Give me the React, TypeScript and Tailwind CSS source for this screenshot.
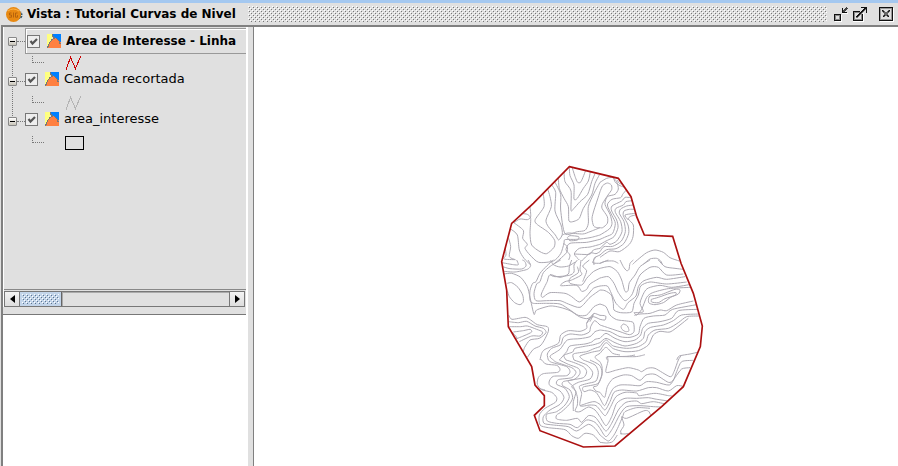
import { useState } from "react";

interface Layer {
  id: string;
  name: string;
  symbol: "red-line" | "gray-line" | "polygon";
  active?: boolean;
}

const layers: Layer[] = [
  { id: "linha", name: "Area de Interesse - Linha", symbol: "red-line", active: true },
  { id: "recortada", name: "Camada recortada", symbol: "gray-line" },
  { id: "area", name: "area_interesse", symbol: "polygon" },
];

const boundary =
  "M238 35L385 70L423 125L440 185L463 240L548 244L573 325L610 415L637 513L631 575L580 695L515 755L375 873L280 876L150 827L133 781L163 752L163 722L135 690L125 635L55 515L50 405L35 320L65 205L130 145Z";

// Contour lines, one sheet per map square
const sheets = [
  {
    x: 0,
    y: 0,
    lines: [
      "M246 36L256 67L263 82L273 80L288 44",
      "M238 38L240 62L252 90L252 132L262 130L280 100L295 78L301 50",
      "M222 50L225 80L243 108L243 166L252 160L270 140L293 118L305 80L315 56",
      "M205 67L208 100L222 130L235 155L237 198L252 199L268 190L280 160L305 120L315 85L328 60",
      "M194 80L212 118L212 165L225 236L262 230L285 226L295 205L295 155L312 115L330 82",
      "M185 90L197 112L195 168L213 210L217 238L206 255L196 240L175 215L168 195L184 155L180 125L173 102",
      "M160 118L162 155L136 193L140 207L175 232L194 256L192 277L170 296L150 290L125 270L120 235L122 190L112 178L98 176",
      "M120 155L122 185L112 194L90 192L72 203",
      "M70 202L100 226L98 250L112 268L105 280L120 300L146 322L190 318L212 296L222 265L225 254L260 253L300 248L330 240",
      "M62 222L82 240L88 285L102 310L120 328",
      "M56 250L62 275L58 305L76 314",
      "M46 280L48 300L42 312L76 314",
      "M232 248L240 242L266 245L262 255L240 257L232 248",
      "M217 240L235 234L278 237L300 230L330 218",
      "M330 110L322 135L312 165L306 190L311 213L322 218L330 218",
      "M330 253L290 262L240 265L228 284L240 300L236 315",
      "M330 268L300 276L268 280L253 297L268 315",
      "M330 280L310 285L298 298L253 297",
      "M330 290L318 296L300 294L275 318",
      "M330 300L312 310L312 330",
      "M220 265L232 275L230 292L210 312L190 328",
    ],
  },
  {
    x: 330,
    y: 0,
    lines: [
      "M0 110L8 92L22 84L34 90L35 104L24 120L8 145L6 160L22 185L22 205L8 218L0 218",
      "M0 82L20 70L38 68L50 80L55 102L45 118L22 125L15 148L30 178L36 205L28 222L0 240",
      "M40 67L46 82L60 92L75 97",
      "M52 75L58 85L72 88",
      "M78 106L68 118L62 128L36 133L22 150L36 182L46 205L38 235L18 245L0 253",
      "M92 128L75 127L65 138L36 153L35 168L50 195L54 218L42 245L18 258L0 268",
      "M97 137L78 140L70 150L48 160L46 172L62 200L66 230L50 258L30 268L20 262L0 280",
      "M100 150L80 153L62 162L58 175L72 200L76 230L64 258L38 274L12 275L0 290",
      "M103 163L88 163L72 168L70 182L84 210L86 235L72 265L48 281L20 284L0 300",
      "M106 180L92 184L85 192L100 210L99 245L88 268L58 290L30 288L0 307",
      "M106 175L75 180L85 195",
      "M0 325L15 319L40 318L55 325",
      "M98 328L112 315L140 293L165 285L190 292L210 308L238 318",
      "M130 328L150 312L170 310L182 318L188 330",
    ],
  },
  {
    x: 0,
    y: 315,
    lines: [
      "M38 20L60 26L95 27L108 18L105 5L97 0",
      "M36 8L70 14L85 14L80 0",
      "M42 34L75 36L112 28L122 16L114 0",
      "M42 42L65 40L92 52L112 80L120 112L132 163L140 150L180 138L210 142L240 152L268 170L290 176L310 170L330 178",
      "M52 70L65 68L84 82L98 105L100 125L90 134L74 128L58 110L52 92",
      "M190 0L170 18L150 40L138 65L128 70L120 92L120 120L130 130L170 130L210 132L240 150L265 166L290 165L312 140L330 132",
      "M212 0L182 18L160 38L150 65L140 72L132 100L138 122L170 122L210 122L235 132L270 142L300 112L330 90",
      "M172 64L180 44L210 52L235 42L238 20L245 0",
      "M172 64L154 102L158 112L180 98L225 100L245 110L268 126L290 108L310 85L330 78",
      "M180 44L195 50L238 46L252 36L252 15L262 0",
      "M182 0L190 14L210 21L235 18L256 6",
      "M273 0L270 30L275 44L245 60L225 65L212 77L260 76L275 94L290 88L300 72L330 54",
      "M262 20L265 38L240 55L240 70L275 75L290 55L310 35L330 25",
      "M298 0L278 18L290 32L282 55L278 65",
      "M318 -10L308 8L330 10",
      "M290 190L305 170L312 160L330 166",
      "M56 165L66 178L105 172L122 180L142 194L172 200L175 214L162 242L150 258L130 268L112 292",
      "M56 185L85 188L110 184L135 198L160 205L168 218L148 235L120 240L104 262L100 275",
      "M58 200L92 200L112 198L140 208L158 216L150 228L125 228L88 245",
      "M70 216L100 212L120 208L125 216L105 226L75 238",
      "M65 215L80 232L74 238",
      "M150 300L155 280L165 268L205 250L212 225L235 212L270 214L290 205L290 190L300 172L310 164L300 185",
      "M175 300L172 282L185 265L212 254L220 232L240 222L275 225L298 216L302 200L314 182L330 195",
      "M190 300L180 288L210 268L232 240L270 236L300 230L315 215L330 210",
      "M208 300L230 275L240 258L285 252L305 246L315 238L330 235",
      "M228 300L222 286L248 276L255 265L290 258L312 254L330 248",
      "M252 300L250 282L290 275L312 266L330 260",
      "M280 300L270 288L308 276L330 272",
      "M322 300L315 290L330 280",
    ],
  },
  {
    x: 330,
    y: 315,
    lines: [
      "M0 10L25 0",
      "M60 0L70 20L80 32L87 28L90 10L100 0",
      "M0 25L30 20L52 35L65 60L75 94L84 92L88 68L105 45L120 20L150 0",
      "M0 54L25 50L42 70L55 98L75 122L95 105L105 80L120 45L150 22L175 22L200 45L250 42",
      "M175 0L195 20L225 25L250 28",
      "M0 78L22 78L34 100L48 130L70 148L84 128L108 108L115 80L132 62L170 52L200 58L255 50",
      "M0 90L15 92L34 105L40 130L42 150L62 158L95 156L102 130L115 105L122 78L150 66L200 72L260 66",
      "M102 158L130 155L120 130L132 98L145 84L180 76L215 82L268 74",
      "M102 158L110 165L125 148L140 112L158 98L205 86L270 82",
      "M145 122L150 108L180 105L225 88L240 90L235 102L212 112L190 128L165 134L148 130L145 122",
      "M154 118L175 112L210 100L228 98L225 106L195 116L175 128L155 126L154 118",
      "M63 200L70 192L82 198L87 212L77 215L66 208L63 200",
      "M0 166L17 168L15 180L0 178",
      "M0 132L18 140L30 165L50 179L80 183L100 188L102 215L88 224L60 215L30 205L0 195",
      "M103 166L120 162L150 160L180 150L200 152L230 135L280 123",
      "M0 210L30 215L60 230L90 232L115 222L120 200L132 175L160 168L195 165L218 148L290 134",
      "M0 235L18 220L45 235L75 245L105 240L122 225L128 205L145 190L180 185L215 175L235 152L292 148",
      "M0 248L18 235L45 248L75 258L110 250L130 235L135 215L152 202L190 195L220 182L245 165L296 162",
      "M0 260L18 240L40 258L80 265L115 260L138 245L145 225L165 210L205 205L235 188L260 170L298 168",
      "M0 272L18 248L40 266L75 275L115 272L145 255L160 225L180 214L210 216L240 195L265 175",
      "M0 280L18 262L38 280L60 285",
      "M22 300L24 290L105 290L135 284",
      "M230 300L238 288L270 282L292 277",
    ],
  },
  {
    x: 0,
    y: 600,
    lines: [
      "M152 12L168 27L200 31L210 42L203 52L160 56L145 68L142 88L155 104L185 112L200 128L196 142L165 160L148 180L150 210L175 218L225 224L245 242L265 250L285 235L310 240L330 262",
      "M175 15L185 22L230 35L240 50L230 62L190 64L178 78L180 92L210 108L222 128L210 148L180 165L160 185L162 205L190 210L235 215L260 228L295 208L315 220L330 240",
      "M190 15L200 22L245 38L258 52L245 68L205 74L200 88L225 100L238 125L225 150L200 170L170 178L172 198L200 205L240 208L262 218L290 195L315 202L330 220",
      "M208 15L235 28L265 40L270 55L255 72L220 80L218 92L240 105L248 128L238 148L215 170L200 180L200 192L230 196L262 190L275 202L295 182L315 186L330 205",
      "M228 15L250 22L280 35L290 50L280 68L235 78L250 95L262 125L262 150L255 168L270 170L295 156L315 165L330 185",
      "M252 15L290 30L308 52L300 72L265 82L245 95L258 110L250 140L250 168",
      "M280 15L315 30L325 52L318 78L290 86L268 94L275 115L270 152L300 150L318 152L330 165",
      "M270 152L300 142L315 140L330 148",
      "M300 15L328 30L336 52L325 85L280 96L282 110L300 105L318 112L330 130",
      "M322 15L330 20",
      "M330 75L322 92L310 96L318 108L330 112",
      "M145 100L165 105",
    ],
  },
  {
    x: 330,
    y: 600,
    lines: [
      "M22 5L24 18L18 52L50 45L85 38L115 45L125 50L142 40L165 40L210 65L222 50L235 15L245 0",
      "M22 5L80 4L105 0",
      "M0 20L6 35L6 60L0 75",
      "M0 112L14 127L22 95L38 72L70 60L95 62L120 76L138 60L165 58L205 82L220 75L230 50L245 20L280 16",
      "M0 130L14 152L28 122L40 100L60 90L90 90L120 92L140 80L170 82L208 90L225 68L245 42L270 38",
      "M0 148L15 165L30 140L42 112L65 105L110 108L145 98L170 98L205 108L230 92L250 94",
      "M0 165L16 182L32 155L48 125L75 112L110 114L118 122L165 115L205 122L215 122",
      "M0 185L18 212L35 185L50 145L75 130L110 130L145 128L165 132L205 138",
      "M0 205L18 228L35 205L55 165L78 142L110 138L125 146L160 140L200 148",
      "M0 220L18 245L38 220L60 178L80 155L120 152L160 155L185 156",
      "M0 240L25 258L42 240L55 215L68 185L75 170L110 158L150 160",
      "M65 238L62 228L72 210L65 185L80 190L130 168L145 168L152 180",
      "M60 236L75 237L85 235",
      "M0 262L20 264L38 260L52 240",
    ],
  },
];

// Rounds the corners of a surveyed polyline while keeping its vertices
function smooth(line: string) {
  const pts = line
    .slice(1)
    .split("L")
    .map((p) => p.split(" ").map(Number));
  let d = `M${pts[0][0]} ${pts[0][1]}`;
  for (let i = 0; i < pts.length - 1; i++) {
    const a = pts[i - 1] ?? pts[i];
    const b = pts[i];
    const c = pts[i + 1];
    const e = pts[i + 2] ?? c;
    d += `C${b[0] + (c[0] - a[0]) / 8} ${b[1] + (c[1] - a[1]) / 8} ${c[0] - (e[0] - b[0]) / 8} ${c[1] - (e[1] - b[1]) / 8} ${c[0]} ${c[1]}`;
  }
  return d;
}

function AppIcon() {
  return (
    <svg viewBox="0 0 17 17" className="h-[17px] w-[17px] shrink-0">
      <circle cx="12.500" cy="9" r="4" fill="#31546b" />
      <path d="M14.500 5.500l1.500 2M15 9.500h2M14 12l1.500 1" stroke="#d1d8dc" fill="none" />
      <circle cx="7.500" cy="8.500" r="7.500" fill="#e88912" />
      <path d="M2 5Q7 1 13 5" stroke="#ffb347" fill="none" />
      <path
        d="M5.500 7H3.500v2h2v2.200H3.200M7.500 6.500v5M11.500 7h-2v4.200h2V9.200"
        stroke="#a9590a"
        strokeWidth="0.800"
        fill="none"
      />
    </svg>
  );
}

function LayerIcon() {
  return (
    <svg viewBox="0 0 15 15" shapeRendering="crispEdges" className="h-[15px] w-[15px] shrink-0">
      <path d="M0 0h7L3 8 0 14z" fill="#ffff80" />
      <path d="M6 0h8v11L10 5 6 4z" fill="#0080ff" />
      <path d="M1 14L3 9L4 6L7 4L10 4L12 7L14 9V14z" fill="#ff8040" />
      <path d="M5.500 0v2L7.500 4L4.500 6L2.500 9L1.500 11L0.500 14" stroke="#777" fill="none" />
      <path d="M9 4L12 7V9L14 10" stroke="#777" fill="none" />
    </svg>
  );
}

function Symbol({ kind }: { kind: Layer["symbol"] }) {
  if (kind === "polygon") {
    return <span className="h-[14px] w-[19px] border border-black" />;
  }
  return (
    <svg viewBox="0 0 17 14" shapeRendering="crispEdges" className="h-[14px] w-[17px]">
      <path
        d="M1 13.500L5.500 1.500L10.500 12.500L15.500 0.500"
        fill="none"
        stroke={kind === "red-line" ? "#cc0000" : "#b4b4b4"}
      />
    </svg>
  );
}

function LayerRow({ layer }: { layer: Layer }) {
  const [visible, setVisible] = useState(true);

  return (
    <li>
      <label
        className={
          layer.active
            ? "flex h-[26px] items-center border border-r-0 border-[#999] pl-px text-[12px] font-bold shadow-[inset_1px_1px_0_#fff]"
            : "flex h-[18px] items-center text-[13px]"
        }
      >
        <span className="relative mr-[7px] h-[13px] w-[13px] shrink-0">
          <input
            type="checkbox"
            checked={visible}
            onChange={(e) => setVisible(e.target.checked)}
            className="block h-[13px] w-[13px] appearance-none border border-[#777] bg-[#eee]"
          />
          {visible && (
            <svg viewBox="0 0 13 13" className="pointer-events-none absolute inset-0">
              <path d="M3.500 6L5.500 8.500L10 4" fill="none" stroke="#555" strokeWidth="2.200" />
            </svg>
          )}
        </span>
        <LayerIcon />
        <span className="ml-1 whitespace-nowrap">{layer.name}</span>
      </label>
      <div
        className={
          layer.active ? "flex h-4 items-start pt-[2px] pl-[7px]" : "flex h-[22px] items-end pl-[7px]"
        }
      >
        <span className="mr-[21px] mb-[7px] h-[7px] w-3 border-b border-l border-dotted border-[#777]" />
        <Symbol kind={layer.symbol} />
      </div>
    </li>
  );
}

function LayerTree() {
  return (
    <div className="flex h-[263px] overflow-hidden border-b border-[#888] pt-px">
      <div className="relative w-[21px] shrink-0 pt-[9px] pl-1">
        <div className="absolute top-[18px] left-2 h-[72px] border-l border-dotted border-[#777]" />
        <div className="relative flex flex-col gap-[31px]">
          {layers.map((l) => (
            <div key={l.id} className="flex h-[9px] items-center">
              <button
                aria-label={`Recolher ${l.name}`}
                className="flex h-[9px] w-[9px] shrink-0 items-center justify-center rounded-[1px] border border-[#888] bg-gradient-to-b from-white to-[#c8c4b8]"
              >
                <span className="h-px w-[5px] bg-black" />
              </button>
              <span className="flex-1 border-t border-dotted border-[#777]" />
            </div>
          ))}
        </div>
      </div>
      <ul className="min-w-0 flex-1">
        {layers.map((l) => (
          <LayerRow key={l.id} layer={l} />
        ))}
      </ul>
    </div>
  );
}

function Scrollbar() {
  const arrow =
    "flex w-[14px] shrink-0 items-center justify-center bg-gradient-to-b from-[#f4f4f4] to-[#ddd]";
  return (
    <div className="mt-px mr-px flex h-4 border border-[#777]">
      <button aria-label="Rolar para a esquerda" className={arrow}>
        <svg viewBox="0 0 5 8" className="h-2 w-[5px]">
          <path d="M5 0v8L0 4z" />
        </svg>
      </button>
      <div className="flex flex-1 border-x border-[#777]">
        <div className="w-[42px] border-r border-[#666] bg-[#c3d5ea] p-[2px]">
          <svg className="block h-[10px] w-full" shapeRendering="crispEdges">
            <defs>
              <pattern id="grip" width="4" height="4" patternUnits="userSpaceOnUse">
                <path d="M0 0h1v1H0zM2 2h1v1H2z" fill="#fff" />
                <path d="M1 1h1v1H1zM3 3h1v1H3z" fill="#5f7690" />
              </pattern>
            </defs>
            <rect width="100%" height="100%" fill="url(#grip)" />
          </svg>
        </div>
        <div className="flex-1 border-t border-l border-[#aaa]" />
      </div>
      <button aria-label="Rolar para a direita" className={arrow}>
        <svg viewBox="0 0 5 8" className="h-2 w-[5px]">
          <path d="M0 0v8L5 4z" />
        </svg>
      </button>
    </div>
  );
}

function TitleBar() {
  return (
    <header className="flex h-[25px] shrink-0 items-center border-t-[3px] border-[#a4c8f0] pr-1 pl-[6px]">
      <AppIcon />
      <h1 className="ml-1 text-[12px] font-bold whitespace-nowrap">Vista : Tutorial Curvas de Nivel</h1>
      <svg className="ml-3 h-4 flex-1" shapeRendering="crispEdges">
        <defs>
          <pattern id="bumps" width="4" height="4" patternUnits="userSpaceOnUse">
            <path d="M0 0h1v1H0zM2 2h1v1H2z" fill="#fff" />
            <path d="M1 1h1v1H1zM3 3h1v1H3z" fill="#777" />
          </pattern>
        </defs>
        <rect width="100%" height="100%" fill="url(#bumps)" />
      </svg>
      <div className="ml-[6px] flex items-center gap-1">
        <button aria-label="Minimizar">
          <svg viewBox="0 0 15 15" shapeRendering="crispEdges" className="block h-[15px] w-[15px]">
            <path d="M2 14.500h6.500V8M9 6.500h6" fill="none" stroke="#fff" />
            <path d="M1.500 7.500h6v6h-6z" fill="none" stroke="#111" />
            <path d="M2.500 8.500h4v4h-4z" fill="none" stroke="#888" />
            <path d="M9.500 1v4.500H14" fill="none" stroke="#111" />
            <path d="M10 5L14 1" fill="none" stroke="#444" strokeWidth="2" />
          </svg>
        </button>
        <button aria-label="Maximizar">
          <svg viewBox="0 0 15 15" shapeRendering="crispEdges" className="block h-[15px] w-[15px]">
            <path d="M1 14.500h10.500V6" fill="none" stroke="#fff" />
            <path d="M8 4.500H1.500v9h9V7" fill="none" stroke="#111" />
            <path d="M8 5.500H2.500v7h7V7" fill="none" stroke="#888" />
            <path d="M4 11L13 2" fill="none" stroke="#777" strokeWidth="2" />
            <path d="M9 0.500h5.500V6M13.500 1L4.500 10" fill="none" stroke="#111" />
          </svg>
        </button>
        <button aria-label="Fechar" className="ml-2">
          <svg viewBox="0 0 15 15" shapeRendering="crispEdges" className="block h-[15px] w-[15px]">
            <path d="M1 14.500h13.500V1" fill="none" stroke="#fff" />
            <path d="M0.500 0.500h13v13H0.500z" fill="none" stroke="#111" />
            <path d="M1.500 1.500h11v11h-11z" fill="none" stroke="#999" />
            <path d="M4 4l6 6M10 4l-6 6" fill="none" stroke="#666" strokeWidth="2" />
            <path d="M3.500 3.500l2 2M10.500 3.500l-2 2M3.500 10.500l2-2M10.500 10.500l-2-2" fill="none" stroke="#111" />
          </svg>
        </button>
      </div>
    </header>
  );
}

function ContourMap() {
  return (
    <svg viewBox="0 0 720 900" role="img" aria-label="Curvas de nivel" className="h-[300px] w-[240px]">
      <clipPath id="area">
        <path d={boundary} />
      </clipPath>
      <g clipPath="url(#area)" fill="none" stroke="#aca9b2" strokeWidth="3" strokeLinejoin="round">
        {sheets.map((s) => (
          <g key={`${s.x}-${s.y}`} transform={`translate(${s.x} ${s.y})`}>
            {s.lines.map((line) => (
              <path key={line} d={smooth(line)} />
            ))}
          </g>
        ))}
      </g>
      <path d={boundary} fill="none" stroke="#ab1010" strokeWidth="5" />
    </svg>
  );
}

export default function App() {
  return (
    <div className="flex h-screen flex-col overflow-hidden bg-[#e0e0e0] font-['DejaVu_Sans',sans-serif] text-black">
      <TitleBar />
      <div className="ml-px flex min-h-0 flex-1 border-t-2 border-l-2 border-[#808080]">
        <aside className="flex w-[245px] shrink-0 flex-col border-r-2 border-white">
          <div className="border-l border-white">
            <LayerTree />
            <Scrollbar />
          </div>
          <div className="mt-[7px] flex-1 border-t border-[#777] bg-white" />
        </aside>
        <main className="ml-[5px] min-w-0 flex-1 overflow-hidden border-l border-[#808080] bg-white pt-32 pl-[236px]">
          <ContourMap />
        </main>
      </div>
    </div>
  );
}
